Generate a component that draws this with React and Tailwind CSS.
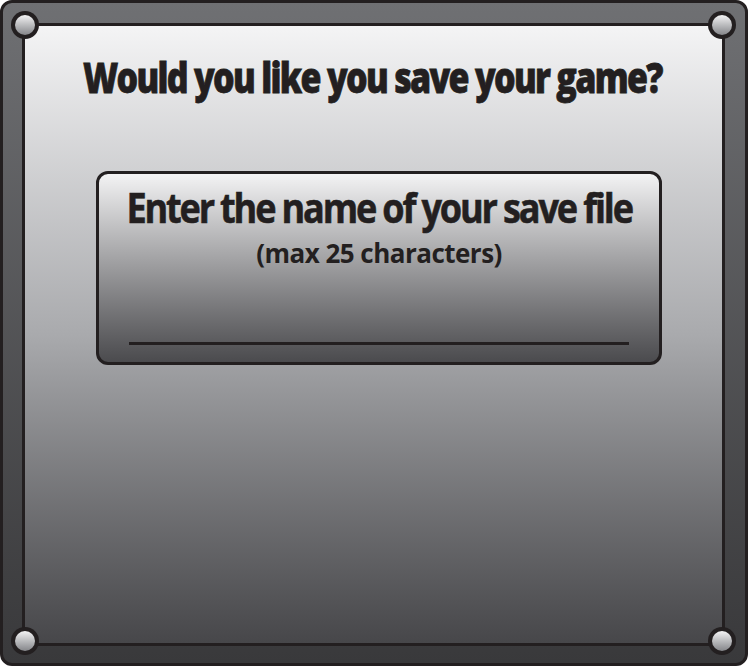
import React from "react";

function Rivet({ className }) {
  return (
    <div
      className={
        "absolute w-[28px] h-[28px] rounded-full bg-[#231f20] flex items-center justify-center " +
        className
      }
    >
      <div className="w-[20px] h-[20px] rounded-full bg-gradient-to-b from-[#f4f4f5] to-[#85868a]" />
    </div>
  );
}

export default function App() {
  return (
    <div className="relative w-[748px] h-[666px] rounded-[12px] border-[3px] border-[#231f20] bg-gradient-to-b from-[#6f7073] to-[#39393b] pl-[19px] pt-[20px] pr-[20px] pb-[17px] font-['Open_Sans',sans-serif] text-[#231f20]">
      <div className="h-full border-[3px] border-[#231f20] bg-gradient-to-b from-[#f4f4f5] via-[#a9aaad] to-[#47474a] flex flex-col">
        <div className="h-[72px] shrink-0 flex items-end justify-center">
          <h1 className="text-[43px] leading-none font-extrabold tracking-[-0.05em] scale-x-[0.79] whitespace-nowrap ml-[-2px] [-webkit-text-stroke:0.8px_#231f20]">
            Would you like you save your game?
          </h1>
        </div>
        <div className="shrink-0 mt-[73px] ml-[71px] w-[566px] h-[194px] rounded-[12px] border-[3px] border-[#231f20] bg-gradient-to-b from-[#f3f3f4] to-[#4b4b4e] flex flex-col items-center">
          <div className="mt-[13px] text-[41px] leading-none font-bold tracking-[-0.06em] scale-x-[0.88] whitespace-nowrap [-webkit-text-stroke:0.6px_#231f20]">
            Enter the name of your save file
          </div>
          <div className="mt-[12px] text-[26px] leading-none font-bold tracking-[-0.02em] whitespace-nowrap">
            (max 25 characters)
          </div>
          <div className="mt-auto mb-[17px] w-[500px] h-[3px] bg-[#231f20]" />
        </div>
      </div>
      <Rivet className="left-[8px] top-[8px]" />
      <Rivet className="left-[705px] top-[8px]" />
      <Rivet className="left-[8px] top-[624px]" />
      <Rivet className="left-[705px] top-[624px]" />
    </div>
  );
}
